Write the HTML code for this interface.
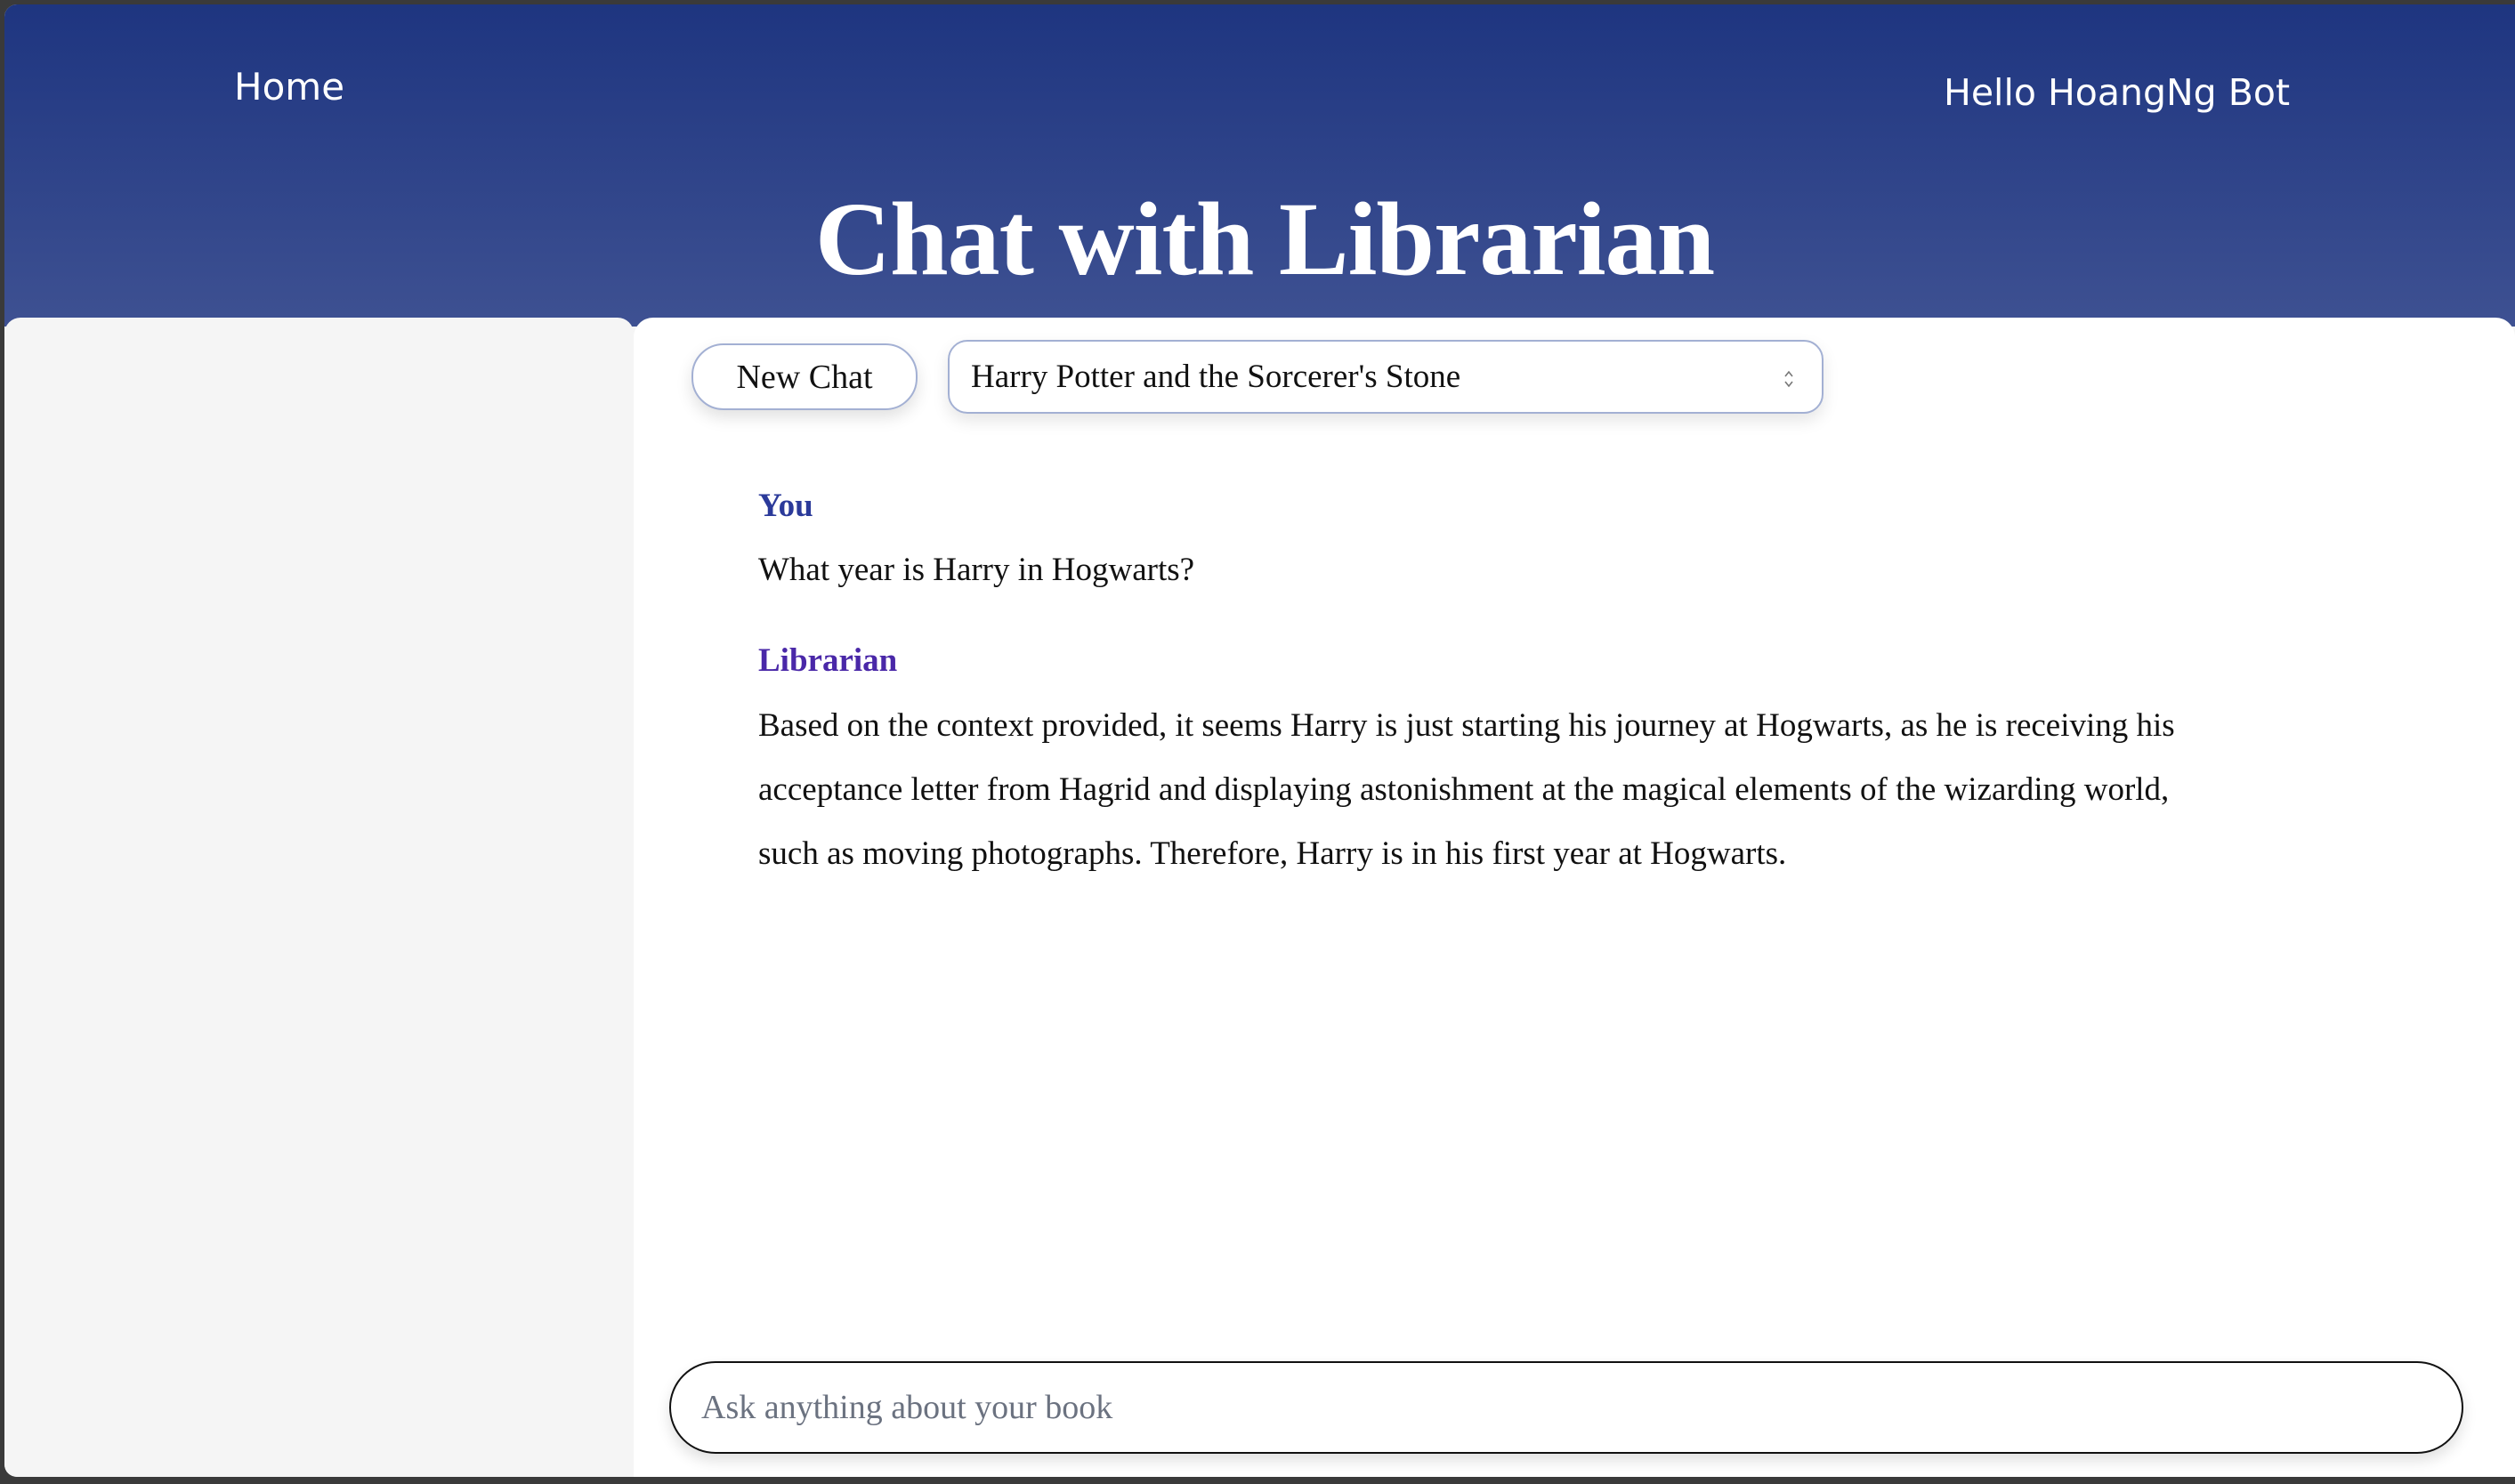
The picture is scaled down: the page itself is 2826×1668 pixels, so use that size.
<!DOCTYPE html>
<html><head><meta charset="utf-8"><style>
*{margin:0;padding:0;box-sizing:border-box}
body{width:2826px;height:1668px;background:#3a3a3a;overflow:hidden;position:relative;font-family:"Liberation Serif",serif}
.frame{position:absolute;left:5px;top:5px;right:0;bottom:8px;border-radius:14px 0 0 14px;overflow:hidden;background:#f5f5f5}
.hdr{position:absolute;left:0;top:0;right:0;height:362px;background:linear-gradient(#1e3580,#3e5192)}
.home{position:absolute;left:258px;top:68px;color:#fff;font:42px "DejaVu Sans",sans-serif}
.hello{position:absolute;left:2179px;top:75px;color:#fff;font:41px "DejaVu Sans",sans-serif}
.title{position:absolute;left:0;width:2832px;text-align:center;top:196px;color:#fff;font:bold 118px "Liberation Serif",serif;letter-spacing:-1px}
.side{position:absolute;left:0;top:352px;width:707px;bottom:0;background:#f5f5f5;border-radius:18px 18px 0 0}
.main{position:absolute;left:707px;top:352px;right:0;bottom:0;background:#fff;border-radius:22px 22px 0 0}
.btn{position:absolute;left:65px;top:29px;width:254px;height:75px;border:2px solid #a3b0d3;border-radius:36px;font-size:38px;display:flex;align-items:center;justify-content:center;color:#111;box-shadow:0 8px 18px rgba(0,0,0,.12)}
.sel{position:absolute;left:353px;top:25px;width:984px;height:83px;border:2px solid #a3b0d3;border-radius:22px;font-size:37px;padding-left:24px;display:flex;align-items:center;color:#111;box-shadow:0 8px 18px rgba(0,0,0,.10)}
.sel svg{position:absolute;right:30px;top:30px}
.msg{position:absolute;left:140px;color:#111;font-size:37px;white-space:nowrap}
.you{color:#2b3a9a;font-weight:bold;font-size:37px}
.lib{color:#4a28a8;font-weight:bold;font-size:37px}
.input{position:absolute;left:40px;right:58px;top:1173px;height:104px;border:2.5px solid #111;border-radius:52px;font-size:38px;color:#6b7280;padding-left:34px;display:flex;align-items:center;box-shadow:0 8px 16px rgba(0,0,0,.12)}
</style></head><body>
<div class="frame">
<div class="hdr">
<div class="home">Home</div>
<div class="hello">Hello HoangNg Bot</div>
<div class="title">Chat with Librarian</div>
</div>
<div class="side"></div>
<div class="main">
<div class="btn">New Chat</div>
<div class="sel">Harry Potter and the Sorcerer's Stone
<svg width="14" height="24" viewBox="0 0 14 24"><path d="M3 9 L7 4 L11 9 M3 15 L7 20 L11 15" fill="none" stroke="#777" stroke-width="1.6"/></svg></div>
<div class="msg you" style="top:190px">You</div>
<div class="msg" style="top:262px">What year is Harry in Hogwarts?</div>
<div class="msg lib" style="top:364px">Librarian</div>
<div class="msg" style="top:437px">Based on the context provided, it seems Harry is just starting his journey at Hogwarts, as he is receiving his</div>
<div class="msg" style="top:509px">acceptance letter from Hagrid and displaying astonishment at the magical elements of the wizarding world,</div>
<div class="msg" style="top:581px">such as moving photographs. Therefore, Harry is in his first year at Hogwarts.</div>
<div class="input">Ask anything about your book</div>
</div>
</div>
</body></html>
